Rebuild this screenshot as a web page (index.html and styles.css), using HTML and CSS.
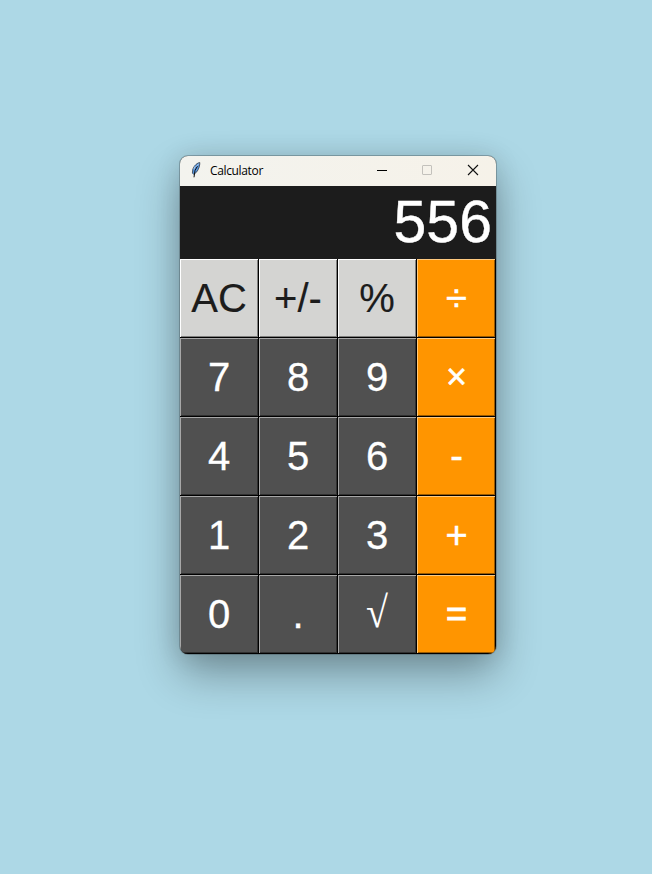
FILE: index.html
```html
<!DOCTYPE html>
<html lang="en">
<head>
<meta charset="utf-8">
<title>Calculator</title>
<link rel="stylesheet" href="styles.css">
</head>
<body>
<main class="window">
  <header class="titlebar">
    <svg class="feather" width="10" height="16" viewBox="0 0 10 16">
      <path d="M8.800 .6C6.500 .8 3.200 3.300 1.800 7.300L1.400 11 2.800 12.500 5.800 9.800C7.800 7 8.900 3.800 8.800 .6Z" fill="#5596e2" stroke="#333a43" stroke-width=".8"/>
      <path d="M6.600 3.800 4 8.500 3 15.300" fill="none" stroke="#111" stroke-width="1"/>
      <path d="M4.200 4.300 2.800 7.200M7.700 1.700 5.500 4.600" fill="none" stroke="#c5d7e8" stroke-width=".8"/>
    </svg>
    <h1 class="title">Calculator</h1>
    <div class="controls">
      <svg width="12" height="12" viewBox="0 0 12 12"><path d="M1 6.500H11" stroke="#000"/></svg>
      <svg width="12" height="12" viewBox="0 0 12 12"><rect x="1.500" y="1.500" width="9" height="9" rx=".5" fill="none" stroke="#c3c1bc"/></svg>
      <svg width="12" height="12" viewBox="0 0 12 12"><path d="M1 1 11 11M11 1 1 11" stroke="#111" stroke-width="1.100"/></svg>
    </div>
  </header>
  <output class="display">556</output>
  <section class="keys">
    <button class="key light">AC</button><button class="key light">+/-</button><button class="key light">%</button><button class="key op">÷</button>
    <button class="key">7</button><button class="key">8</button><button class="key">9</button><button class="key op times">×</button>
    <button class="key">4</button><button class="key">5</button><button class="key">6</button><button class="key op">-</button>
    <button class="key">1</button><button class="key">2</button><button class="key">3</button><button class="key op">+</button>
    <button class="key">0</button><button class="key">.</button><button class="key root"><span>√</span></button><button class="key op equals">=</button>
  </section>
</main>
</body>
</html>
```
FILE: styles.css
```css
* { box-sizing: border-box; }

body {
  margin: 0;
  height: 874px;
  padding: 156px 0 0 180px;
  background: #add8e6;
  font-family: "Liberation Sans", Arial, sans-serif;
  overflow: hidden;
}

.window {
  width: 316px;
  height: 498px;
  border-radius: 8px;
  overflow: hidden;
  background: #1c1c1c;
  box-shadow: 0 0 0 1px rgba(70, 85, 90, .4), 0 20px 44px rgba(0, 0, 0, .32), 0 1px 26px rgba(0, 0, 0, .12);
}

.titlebar {
  height: 30px;
  padding: 0 17px 0 11px;
  display: flex;
  align-items: center;
  background: linear-gradient(90deg, #f3f3ee, #f6f2e9);
}

.feather { margin-bottom: 2px; }

.title {
  margin: 0 0 0 9px;
  font: 12px/16px "Open Sans", "Noto Sans", sans-serif;
  letter-spacing: -.35px;
  color: #000;
}

.controls {
  margin-left: auto;
  display: flex;
  gap: 33px;
}

.controls svg { display: block; margin-bottom: 2px; }
.controls svg:first-child { margin-right: 1px; }
.controls svg:last-child { margin-left: 1px; }
.controls svg:nth-child(2) { margin-left: -1px; }

.display {
  display: block;
  height: 73px;
  padding-right: 4px;
  color: #fff;
  font-size: 59px;
  line-height: 73px;
  text-align: right;
  -webkit-text-stroke: .4px #fff;
}

.keys {
  display: grid;
  grid-template-columns: repeat(4, 79px);
  grid-auto-rows: 79px;
}

.key {
  margin: 0;
  padding: 0;
  border: solid #000;
  border-width: 0 1px 1px 0;
  background: #505050;
  box-shadow: inset 1px 1px #a7a7a7, inset -1px -1px #303030;
  color: #fff;
  font: 40px/78px "Liberation Sans", Arial, sans-serif;
  -webkit-text-stroke: .3px currentColor;
}

.light {
  background: #d4d4d2;
  color: #1c1c1c;
  box-shadow: inset 1px 1px #fff, inset -1px -1px #7f7f7e;
  -webkit-text-stroke-width: .15px;
}

.op {
  padding-left: 1px;
  background: #ff9500;
  box-shadow: inset 1px 1px #ffca80, inset -1px -1px #995900;
  font-size: 38px;
  -webkit-text-stroke-width: .5px;
}

.times { font-size: 36px; }

.equals {
  font-size: 36px;
  -webkit-text-stroke-width: 1px;
}

.root { -webkit-text-stroke-width: 0; }

.root span {
  display: block;
  font-family: "Liberation Serif", serif;
  transform: translateY(-1px) scaleY(1.1);
}
```
